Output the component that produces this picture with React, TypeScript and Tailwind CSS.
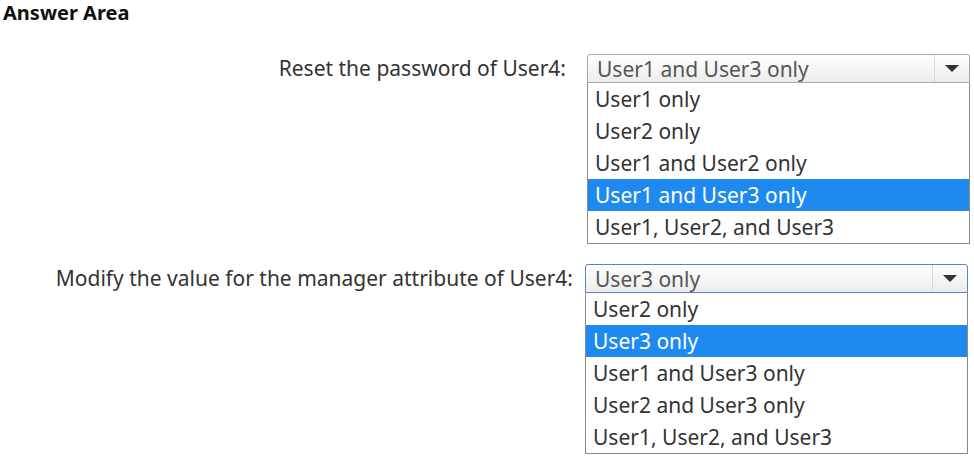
import React from "react";

const font = { fontFamily: '"Noto Sans", "Open Sans", sans-serif' };

function Dropdown({
  value,
  options,
  selected,
  focused,
}: {
  value: string;
  options: string[];
  selected: number;
  focused?: boolean;
}) {
  return (
    <div className="flex w-[383px] flex-col">
      <div
        className={`flex h-[29px] items-stretch rounded-t-[3px] border bg-gradient-to-b from-white to-[#ececec] ${
          focused ? "border-[#5a82c8]" : "border-[#a8a8a8]"
        }`}
      >
        <div className="flex flex-1 items-center pl-[9px] pt-[2px] text-[21px] leading-none text-[#555]">
          {value}
        </div>
        <div className="flex w-[35px] items-center justify-center border-l border-[#d8d8d8]">
          <svg width="14" height="8" viewBox="0 0 14 8">
            <path d="M0 0 L14 0 L7 7 Z" fill="#333" />
          </svg>
        </div>
      </div>
      <div className="flex flex-col border border-t-0 border-[#8a8a8a] bg-white">
        {options.map((o, i) => (
          <div
            key={o}
            className={`flex h-[32px] items-center pl-[7px] text-[21px] leading-none ${
              i === selected ? "bg-[#1e8af0] text-white" : "text-[#333]"
            }`}
          >
            {o}
          </div>
        ))}
      </div>
    </div>
  );
}

export default function App() {
  return (
    <div className="h-[458px] w-[974px] bg-white" style={font}>
      <div className="pl-[3px] text-[20px] font-bold leading-[26px] text-[#111]">
        Answer Area
      </div>
      <div className="mt-[28px] flex">
        <div className="flex w-[566px] justify-end pt-[1px] text-[21px] leading-[26px] text-[#333]">
          Reset the password of User4:
        </div>
        <div className="ml-[21px]">
          <Dropdown
            value="User1 and User3 only"
            selected={3}
            options={[
              "User1 only",
              "User2 only",
              "User1 and User2 only",
              "User1 and User3 only",
              "User1, User2, and User3",
            ]}
          />
        </div>
      </div>
      <div className="mt-[20px] flex">
        <div className="flex w-[573px] justify-end pt-[1px] text-[21px] leading-[26px] text-[#333]">
          Modify the value for the manager attribute of User4:
        </div>
        <div className="ml-[12px]">
          <Dropdown
            value="User3 only"
            selected={1}
            focused
            options={[
              "User2 only",
              "User3 only",
              "User1 and User3 only",
              "User2 and User3 only",
              "User1, User2, and User3",
            ]}
          />
        </div>
      </div>
    </div>
  );
}
